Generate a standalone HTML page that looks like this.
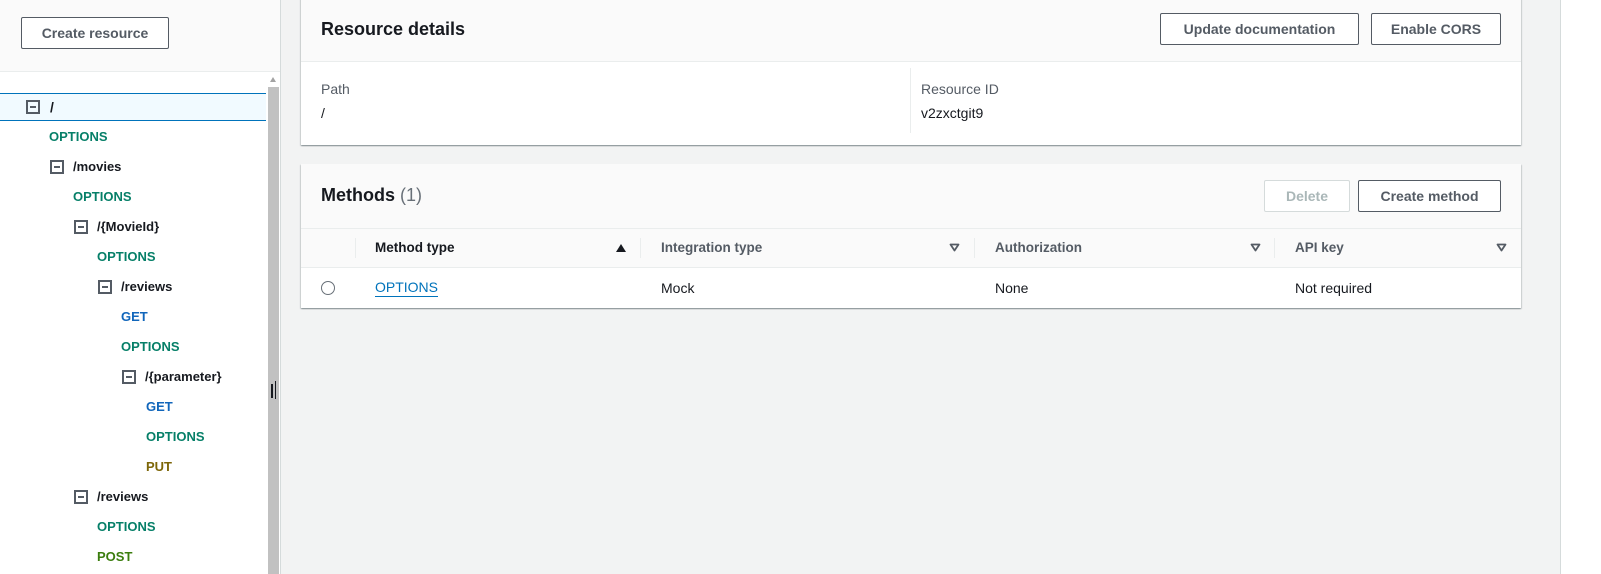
<!DOCTYPE html>
<html><head><meta charset="utf-8"><style>
*{box-sizing:border-box;margin:0;padding:0}
body{width:1601px;height:574px;overflow:hidden;background:#f2f3f3;font-family:"Liberation Sans",Arial,sans-serif;color:#16191f;position:relative}
.a{position:absolute}
.btn{position:absolute;border:1px solid #545b64;border-radius:2px;background:#fff;color:#545b64;font-weight:bold;font-size:14px;display:flex;align-items:center;justify-content:center}
.t{position:absolute;font-size:13px;font-weight:bold;line-height:16px;white-space:nowrap}
.box{position:absolute;width:14px;height:14px;border:2px solid #545b64}
.box:after{content:"";position:absolute;left:2px;right:2px;top:4px;height:2px;background:#545b64}
.O{color:#067f68}.G{color:#1166bb}.P{color:#7d6608}.S{color:#3b7d0e}.R{color:#16191f}
.tx{position:absolute;font-size:14px;line-height:18px;white-space:nowrap}
.sep{position:absolute;width:1px;background:#eaeded}
.pn{position:absolute;background:#fff;box-shadow:0 1px 1px 0 rgba(0,28,36,.3),1px 1px 1px 0 rgba(0,28,36,.12),-1px 1px 1px 0 rgba(0,28,36,.12)}
</style></head><body>
<div class="a" style="left:0;top:0;width:281px;height:574px;background:#fff;border-right:1px solid #d5dbdb"></div>
<div class="a" style="left:0;top:0;width:280px;height:72px;background:#fafafa;border-bottom:1px solid #eaeded"></div>
<div class="btn" style="left:21px;top:17px;width:148px;height:32px">Create resource</div>
<div class="a" style="left:268px;top:87px;width:11px;height:487px;background:#c1c1c1"></div>
<div class="a" style="left:270px;top:77px;width:0;height:0;border-left:3.5px solid transparent;border-right:3.5px solid transparent;border-bottom:5px solid #a3a3a3"></div>
<div class="a" style="left:271px;top:384px;width:2px;height:14px;background:#16191f"></div>
<div class="a" style="left:275px;top:381px;width:1px;height:18px;background:#16191f"></div>
<div class="a" style="left:0;top:93px;width:266px;height:28px;background:#f1faff;border-top:1px solid #0073bb;border-bottom:1px solid #0073bb"></div>
<div class="box" style="left:26px;top:100px"></div><div class="t R" style="left:50px;top:99px;font-size:14px">/</div>
<div class="t O" style="left:49px;top:129px">OPTIONS</div>
<div class="box" style="left:50px;top:160px"></div><div class="t R" style="left:73px;top:159px">/movies</div>
<div class="t O" style="left:73px;top:189px">OPTIONS</div>
<div class="box" style="left:74px;top:220px"></div><div class="t R" style="left:97px;top:219px">/{MovieId}</div>
<div class="t O" style="left:97px;top:249px">OPTIONS</div>
<div class="box" style="left:98px;top:280px"></div><div class="t R" style="left:121px;top:279px">/reviews</div>
<div class="t G" style="left:121px;top:309px">GET</div>
<div class="t O" style="left:121px;top:339px">OPTIONS</div>
<div class="box" style="left:122px;top:370px"></div><div class="t R" style="left:145px;top:369px">/{parameter}</div>
<div class="t G" style="left:146px;top:399px">GET</div>
<div class="t O" style="left:146px;top:429px">OPTIONS</div>
<div class="t P" style="left:146px;top:459px">PUT</div>
<div class="box" style="left:74px;top:490px"></div><div class="t R" style="left:97px;top:489px">/reviews</div>
<div class="t O" style="left:97px;top:519px">OPTIONS</div>
<div class="t S" style="left:97px;top:549px">POST</div>
<div class="a" style="left:1560px;top:0;width:41px;height:574px;background:#fff;border-left:1px solid #d5dbdb"></div>
<div class="pn" style="left:301px;top:-2px;width:1220px;height:147px"></div>
<div class="a" style="left:301px;top:0;width:1220px;height:62px;background:#fafafa;border-bottom:1px solid #eaeded"></div>
<div class="tx" style="left:321px;top:18px;font-size:18px;font-weight:bold;line-height:22px">Resource details</div>
<div class="btn" style="left:1160px;top:13px;width:199px;height:32px">Update documentation</div>
<div class="btn" style="left:1371px;top:13px;width:130px;height:32px">Enable CORS</div>
<div class="tx" style="left:321px;top:80px;color:#545b64">Path</div>
<div class="tx" style="left:321px;top:104px">/</div>
<div class="sep" style="left:910px;top:68px;height:65px"></div>
<div class="tx" style="left:921px;top:80px;color:#545b64">Resource ID</div>
<div class="tx" style="left:921px;top:104px">v2zxctgit9</div>
<div class="pn" style="left:301px;top:164px;width:1220px;height:144px"></div>
<div class="a" style="left:301px;top:164px;width:1220px;height:104px;background:#fafafa;border-bottom:1px solid #eaeded"></div>
<div class="a" style="left:301px;top:228px;width:1220px;height:1px;background:#eaeded"></div>
<div class="tx" style="left:321px;top:184px;font-size:18px;font-weight:bold;line-height:22px">Methods <span style="font-weight:normal;color:#687078">(1)</span></div>
<div class="btn" style="left:1264px;top:180px;width:86px;height:32px;border-color:#d5dbdb;color:#aab7b8">Delete</div>
<div class="btn" style="left:1358px;top:180px;width:143px;height:32px">Create method</div>
<div class="sep" style="left:355px;top:238px;height:20px"></div>
<div class="sep" style="left:640px;top:238px;height:20px"></div>
<div class="sep" style="left:974px;top:238px;height:20px"></div>
<div class="sep" style="left:1274px;top:238px;height:20px"></div>
<div class="tx" style="left:375px;top:239px;font-weight:bold;font-size:13.5px">Method type</div>
<div class="tx" style="left:661px;top:239px;font-weight:bold;font-size:13.5px;color:#545b64">Integration type</div>
<div class="tx" style="left:995px;top:239px;font-weight:bold;font-size:13.5px;color:#545b64">Authorization</div>
<div class="tx" style="left:1295px;top:239px;font-weight:bold;font-size:13.5px;color:#545b64">API key</div>
<div class="a" style="left:616px;top:244px;border-left:5px solid transparent;border-right:5px solid transparent;border-bottom:8px solid #16191f"></div>
<svg class="a" style="left:949px;top:243px" width="11" height="9"><path d="M1.5 1.5h8L5.5 7.5z" fill="none" stroke="#545b64" stroke-width="1.8" stroke-linejoin="round"/></svg>
<svg class="a" style="left:1250px;top:243px" width="11" height="9"><path d="M1.5 1.5h8L5.5 7.5z" fill="none" stroke="#545b64" stroke-width="1.8" stroke-linejoin="round"/></svg>
<svg class="a" style="left:1496px;top:243px" width="11" height="9"><path d="M1.5 1.5h8L5.5 7.5z" fill="none" stroke="#545b64" stroke-width="1.8" stroke-linejoin="round"/></svg>
<div class="a" style="left:321px;top:281px;width:14px;height:14px;border:1.5px solid #687078;border-radius:50%"></div>
<div class="tx" style="left:375px;top:279px;color:#0073bb;border-bottom:1px solid #0073bb;line-height:17px">OPTIONS</div>
<div class="tx" style="left:661px;top:279px">Mock</div>
<div class="tx" style="left:995px;top:279px">None</div>
<div class="tx" style="left:1295px;top:279px">Not required</div>
</body></html>
